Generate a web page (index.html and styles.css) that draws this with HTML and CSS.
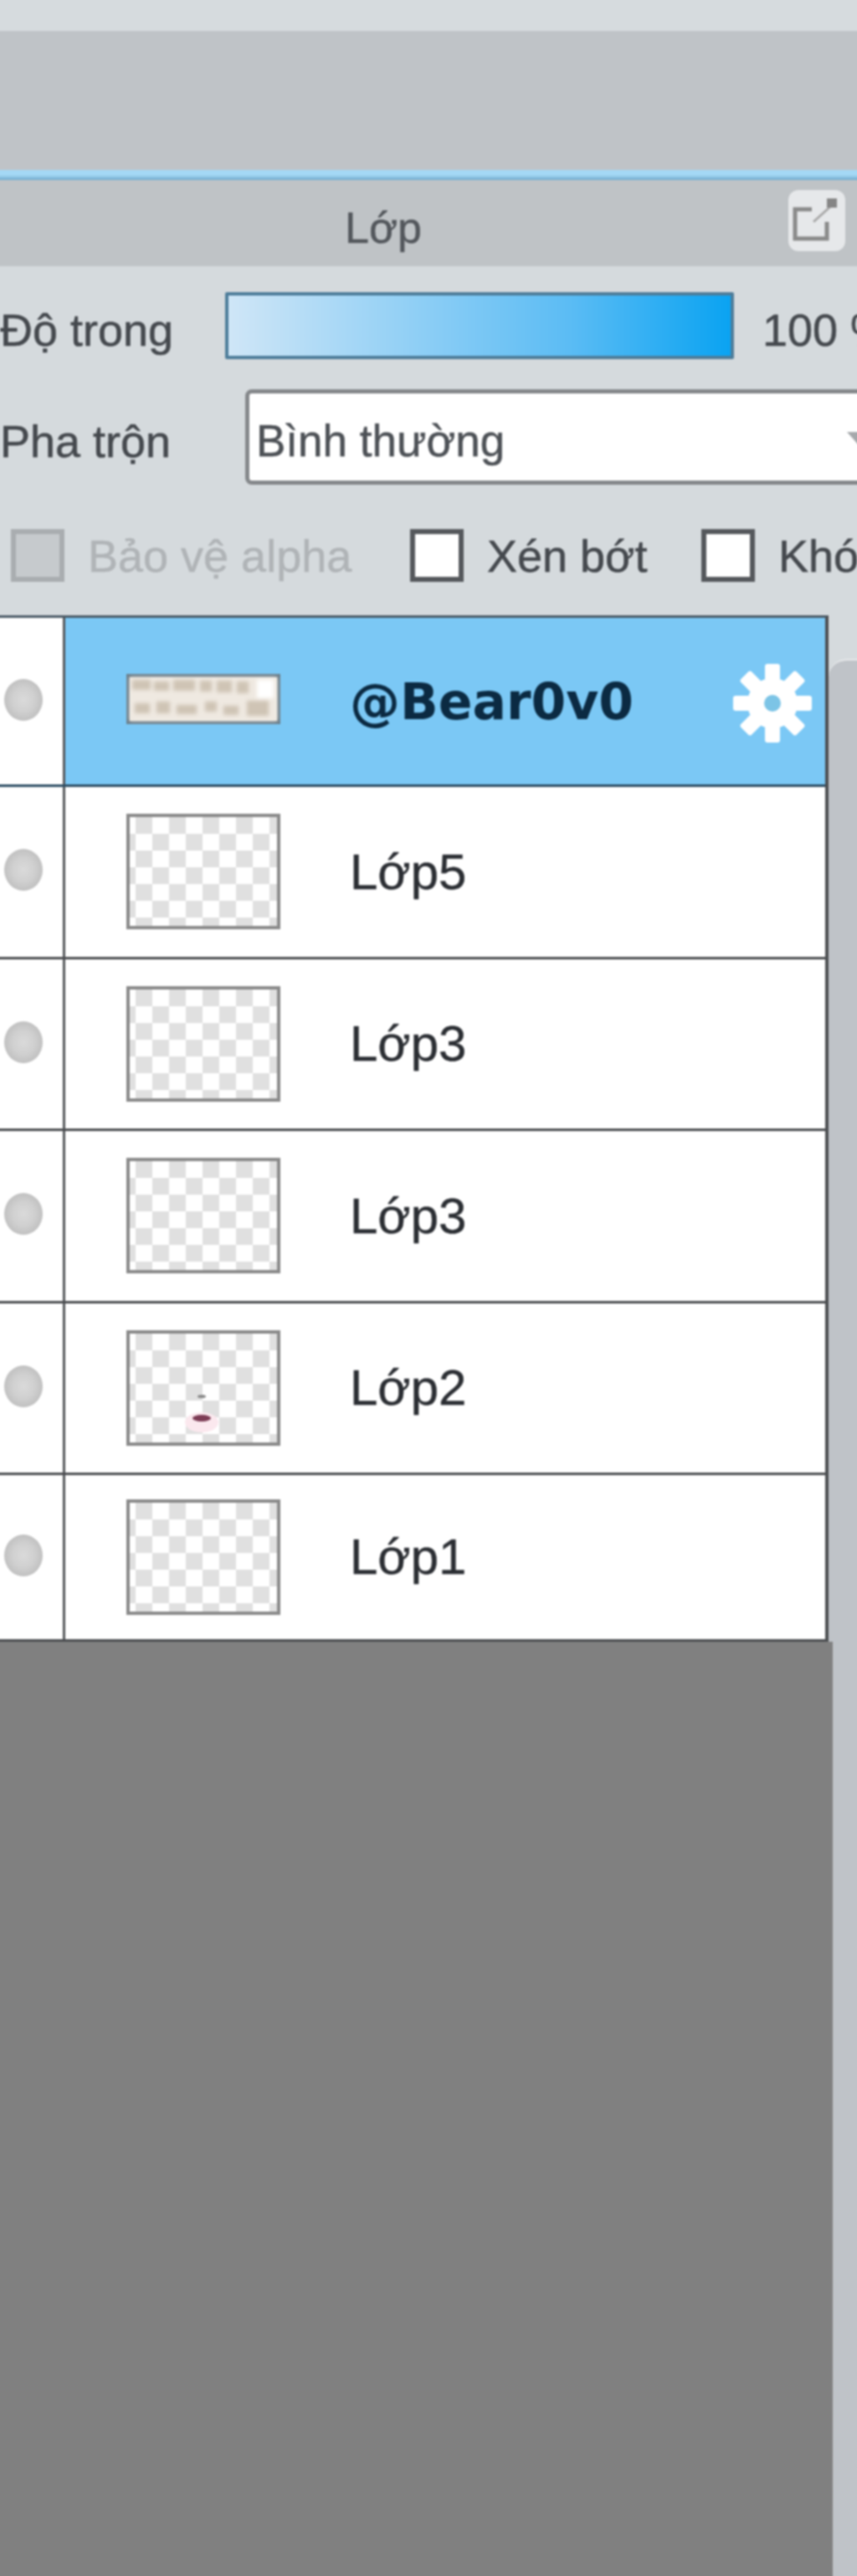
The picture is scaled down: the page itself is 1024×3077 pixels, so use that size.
FILE: index.html
```html
<!DOCTYPE html>
<html lang="vi">
<head>
  <meta charset="UTF-8" />
  <title>Lớp</title>
  <meta name="viewport" content="width=device-width, initial-scale=1.0"/>
  <link rel="stylesheet" href="styles.css">
</head>
<body>

  <div class="app">
    <div class="top-band"></div>
    <div class="toolbar"></div>
    <div class="blue-line"></div>

    <header class="title-bar">
      <h1>Lớp</h1>
      <button class="popout" aria-label="Tách bảng">
        <svg viewBox="0 0 68 73" width="68" height="73">
          <path d="M28 23H8v35h38V38" fill="none" stroke="#8a8a8a" stroke-width="5"/>
          <path d="M30 38 50 20" stroke="#a9a9a9" stroke-width="3"/>
          <rect x="46" y="10" width="12" height="11" fill="#858585"/>
        </svg>
      </button>
    </header>

    <section class="controls">
      <div class="row-opacity">
        <span class="label label-opacity">Độ trong</span>
        <div class="slider"></div>
        <span class="label slider-value">100 %</span>
      </div>
      <div class="row-blend">
        <span class="label label-blend">Pha trộn</span>
        <div class="select">
          <span>Bình thường</span>
          <i class="arrow"></i>
        </div>
      </div>
      <div class="row-checks">
        <label class="check disabled check-alpha"><i class="box"></i>Bảo vệ alpha</label>
        <label class="check check-clip"><i class="box"></i>Xén bớt</label>
        <label class="check"><i class="box"></i>Khóa</label>
      </div>
    </section>

    <section class="layers">
      <div class="layer-area">
        <div class="layer-list">
          <div class="layer selected">
            <div class="eye"><i class="dot"></i></div>
            <div class="layer-body">
              <div class="thumb thumb-text">
                <svg viewBox="0 0 176 52" preserveAspectRatio="none">
                  <rect width="176" height="52" fill="#efe9e1"/>
                  <g fill="#cfc4b5">
                    <rect x="3" y="3" width="22" height="12"/><rect x="29" y="5" width="18" height="11"/>
                    <rect x="52" y="3" width="26" height="13"/><rect x="84" y="4" width="14" height="13"/>
                    <rect x="104" y="4" width="18" height="14"/><rect x="128" y="5" width="14" height="14"/>
                    <rect x="6" y="31" width="18" height="12"/><rect x="32" y="29" width="16" height="14"/>
                    <rect x="56" y="33" width="24" height="11"/><rect x="90" y="29" width="14" height="12"/>
                    <rect x="112" y="34" width="18" height="11"/><rect x="140" y="28" width="26" height="18"/>
                  </g>
                  <rect x="152" y="3" width="20" height="22" fill="#fff"/>
                </svg>
              </div>
              <span class="layer-name">@Bear0v0</span>
              <svg class="gear" viewBox="0 0 94 94" width="94" height="94">
                <g fill="#fff">
                  <rect x="38" y="0" width="18" height="94" rx="3"/>
                  <rect x="38" y="0" width="18" height="94" rx="3" transform="rotate(45 47 47)"/>
                  <rect x="38" y="0" width="18" height="94" rx="3" transform="rotate(90 47 47)"/>
                  <rect x="38" y="0" width="18" height="94" rx="3" transform="rotate(135 47 47)"/>
                  <circle cx="47" cy="47" r="30"/>
                </g>
                <circle cx="47" cy="47" r="10" fill="#7cc4e6"/>
              </svg>
            </div>
          </div>
          <div class="layer">
            <div class="eye"><i class="dot"></i></div>
            <div class="layer-body">
              <div class="thumb"></div>
              <span class="layer-name">Lớp5</span>
            </div>
          </div>
          <div class="layer">
            <div class="eye"><i class="dot"></i></div>
            <div class="layer-body">
              <div class="thumb"></div>
              <span class="layer-name">Lớp3</span>
            </div>
          </div>
          <div class="layer">
            <div class="eye"><i class="dot"></i></div>
            <div class="layer-body">
              <div class="thumb"></div>
              <span class="layer-name">Lớp3</span>
            </div>
          </div>
          <div class="layer">
            <div class="eye"><i class="dot"></i></div>
            <div class="layer-body">
              <div class="thumb">
                <svg viewBox="0 0 176 130">
                  <ellipse cx="86" cy="75" rx="5" ry="2" fill="#8b8b8b"/>
                  <ellipse cx="86" cy="106" rx="20" ry="12" fill="#fbe8ee"/>
                  <ellipse cx="86" cy="101" rx="11" ry="4" fill="#7d3c55"/>
                </svg>
              </div>
              <span class="layer-name">Lớp2</span>
            </div>
          </div>
          <div class="layer last">
            <div class="eye"><i class="dot"></i></div>
            <div class="layer-body">
              <div class="thumb"></div>
              <span class="layer-name">Lớp1</span>
            </div>
          </div>
        </div>
        <div class="layer-fill"></div>
      </div>
      <div class="scrollbar"></div>
    </section>
  </div>

</body>
</html>
```

FILE: styles.css
```css
html, body {
  margin: 0;
  height: 3077px;
  overflow: hidden;
  background: #808080;
}
/* the whole shot is a soft upscale, so the panel is blurred; it runs 6px past the window so the blur has no pale edge */
.app {
  width: 1036px;
  height: 3089px;
  margin: -6px 0 0 -6px;
  display: flex;
  flex-direction: column;
  background: #d5dadd;
  font-family: "Liberation Sans", Arial, sans-serif;
  color: #3c4046;
  filter: blur(1.2px);
}
.top-band {
  height: 43px;
  background: #d6dbde;
}
.toolbar {
  height: 166px;
  background: #bfc3c7;
}
.blue-line {
  height: 12px;
  background: linear-gradient(#a4d8f5, #a4d8f5 50%, #6fa9cc);
}
.title-bar {
  height: 103px;
  display: flex;
  align-items: center;
  justify-content: center;
  position: relative;
  background: #bfc3c6;
}
.title-bar h1 {
  margin: 10px 108px 0 0;
  font-size: 52px;
  font-weight: normal;
  color: #53575c;
  -webkit-text-stroke: 0.5px #53575c;
}
.popout {
  position: absolute;
  right: 20px;
  top: 12px;
  width: 68px;
  height: 73px;
  padding: 0;
  border: none;
  border-radius: 12px;
  background: #e6e8ea;
  display: flex;
}

.controls {
  height: 417px;
  padding-left: 6px;
  display: flex;
  flex-direction: column;
}
.label {
  font-size: 54px;
  color: #45494e;
  padding-top: 10px;
  -webkit-text-stroke: 0.5px #45494e;
}
.row-opacity {
  display: flex;
  align-items: center;
  margin-top: 31px;
  height: 80px;
}
.label-opacity {
  width: 269px;
  flex: none;
  white-space: nowrap;
}
.slider {
  width: 608px;
  height: 80px;
  flex: none;
  box-sizing: border-box;
  border: 4px solid #4e7d9a;
  border-radius: 2px;
  background: linear-gradient(90deg, #cfe6f7, #5bbcf4 68%, #0aa3f2);
}
.slider-value {
  margin-left: 34px;
  white-space: nowrap;
}
.row-blend {
  display: flex;
  align-items: center;
  margin-top: 36px;
  height: 114px;
}
.label-blend {
  width: 293px;
  flex: none;
  white-space: nowrap;
}
.select {
  flex: none;
  width: 760px;
  height: 114px;
  box-sizing: border-box;
  border: 5px solid #85888b;
  border-radius: 8px;
  background: #fff;
  padding: 8px 0 0 8px;
  display: flex;
  align-items: center;
  font-size: 53px;
  color: #4d5156;
  -webkit-text-stroke: 0.5px #4d5156;
  position: relative;
}
.arrow {
  position: absolute;
  left: 714px;
  top: 46px;
  border-left: 16px solid transparent;
  border-right: 16px solid transparent;
  border-top: 18px solid #a5a8ab;
}
.row-checks {
  display: flex;
  align-items: center;
  margin-top: 53px;
  height: 63px;
  padding-left: 13px;
}
.check {
  display: flex;
  align-items: center;
  gap: 28px;
  flex: none;
  font-size: 54px;
  color: #45494e;
  -webkit-text-stroke: 0.5px #45494e;
  white-space: nowrap;
}
.check-alpha {
  width: 477px;
}
.check-clip {
  width: 348px;
}
.box {
  width: 64px;
  height: 63px;
  box-sizing: border-box;
  border: 6px solid #55585c;
  background: #fff;
  flex: none;
}
.check.disabled {
  color: #b0b4b7;
  -webkit-text-stroke: 0.5px #b0b4b7;
}
.check.disabled .box {
  border-color: #a9adb0;
  background: #c6cacd;
}

.layers {
  flex: 1;
  display: flex;
  min-height: 0;
}
.layer-area {
  width: 996px;
  flex: none;
  display: flex;
  flex-direction: column;
}
.layer-list {
  border-top: 3px solid #4b5a66;
  border-right: 4px solid #4d4f52;
}
.layer-fill {
  flex: 1;
  margin-right: -5px;
  position: relative;
  background: #808080;
}
.layer {
  height: 202.5px;
  display: flex;
  background: #fff;
  border-bottom: 3px solid #4a4c4f;
}
.layer.selected {
  height: 199px;
  border-bottom-color: #2c4d63;
}
.layer.last {
  height: 195.5px;
}
.eye {
  width: 84px;
  flex: none;
  display: flex;
  align-items: center;
  box-sizing: border-box;
  padding: 0 0 4px 11px;
  border-right: 3px solid #55585b;
}
.dot {
  width: 46px;
  height: 50px;
  border-radius: 50%;
  background: radial-gradient(#dadada, #d0d0d0 40%, #b2b2b2);
}
.layer-body {
  flex: 1;
  display: flex;
  align-items: center;
  position: relative;
  padding-left: 73px;
}
.selected .layer-body {
  background: #7bc8f5;
}
.thumb {
  width: 184px;
  height: 138px;
  flex: none;
  box-sizing: border-box;
  border: 4px solid #8a8a8a;
  background: repeating-conic-gradient(#fff 0 25%, #e0e0e0 0 50%) 7px 0 / 40px 40px;
}
.thumb svg {
  display: block;
  width: 100%;
  height: 100%;
}
.thumb-text {
  height: 60px;
  margin-top: -6px;
  border-color: #6b7f8c;
  background: #efe9e1;
}
.thumb-text svg {
  filter: blur(2px);
}
.layer-name {
  margin-left: 83px;
  font-size: 60px;
  color: #2b2e33;
  -webkit-text-stroke: 0.4px #2b2e33;
}
.selected .layer-name {
  font-family: "DejaVu Sans", sans-serif;
  font-weight: bold;
  color: #0b2a42;
  -webkit-text-stroke: 0;
}
.gear {
  position: absolute;
  left: 798px;
  top: 55px;
}
.scrollbar {
  flex: 1;
  margin-top: 52px;
  border-top-left-radius: 22px;
  border-top: 2px solid #e6e8ea;
  background: #bfc3c8;
}
```
